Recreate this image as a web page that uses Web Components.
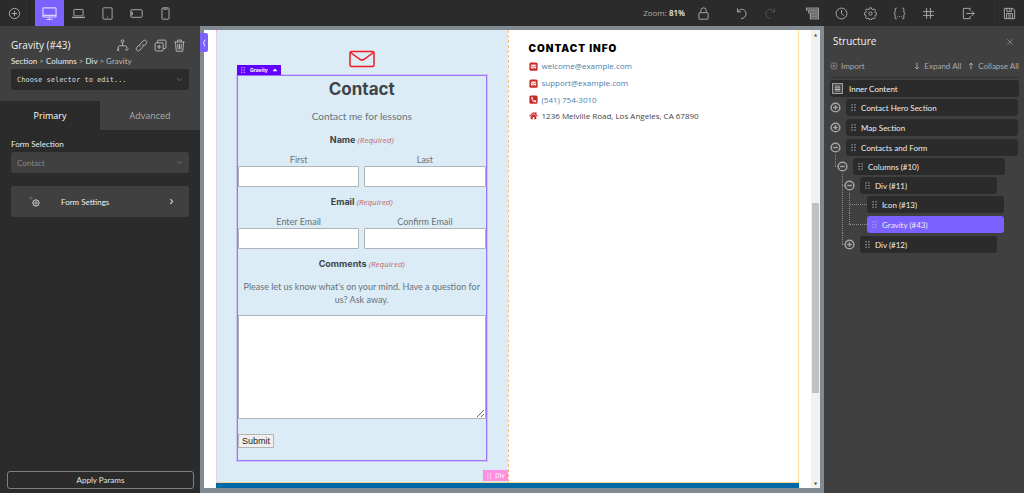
<!DOCTYPE html>
<html lang="en">
<head>
<meta charset="utf-8">
<meta name="viewport" content="width=device-width, initial-scale=1">
<title>Page builder</title>
<style>
  html, body { height: 100%; margin: 0; }
  body { background: #404040; color: #e4e4e4; font: 8px/12px Lato, "Open Sans", sans-serif; }
</style>
</head>
<body>
<builder-app></builder-app>

<script>
const ICONS = {
  plus: '<circle cx="12" cy="12" r="9.5"/><path d="M12 7v10M7 12h10"/>',
  minus: '<circle cx="12" cy="12" r="9.5"/><path d="M7 12h10"/>',
  desktop: '<rect x="1.5" y="3" width="21" height="14.5" rx="1"/><path d="M12 17.500v3.500M7 21.500h10M1.500 15h21"/>',
  laptop: '<rect x="3.500" y="4.500" width="17" height="12" rx="1"/><path d="M1 19.500h22M1 17.500v2h22v-2"/>',
  tablet: '<rect x="3.500" y="1.500" width="17" height="21" rx="1.500"/><path d="M11 18.500h2"/>',
  landscape: '<rect x="1.500" y="5" width="21" height="14" rx="1.500"/><path d="M4.500 10v4M1.500 9h2v6h-2"/>',
  phone: '<rect x="5.500" y="1.500" width="13" height="21" rx="1.500"/><path d="M9 2v2.200h6V2"/>',
  lock: '<rect x="3.500" y="10.500" width="17" height="12" rx="1"/><path d="M7 10.500V6.500a5 5 0 0 1 10 0v4"/>',
  undo: '<path d="M4.500 2.500v6.500h6.500M4.500 9c4-5.500 10-6 13.500-2.500 3.500 3.700 3 9-.5 12.500-1.800 1.700-4 2.500-6.500 2.500"/>',
  redo: '<path d="M19.500 2.500v6.500H13M19.500 9C15.500 3.500 9.500 3 6 6.500c-3.500 3.700-3 9 .5 12.500 1.800 1.700 4 2.500 6.500 2.500"/>',
  layers: '<rect x="1" y="2" width="22" height="3.500"/><rect x="5" y="7.500" width="18" height="3.500"/><rect x="8" y="13" width="15" height="3.500"/><rect x="8" y="18.500" width="15" height="3.500"/>',
  clock: '<circle cx="12" cy="12" r="10"/><path d="M12 5.500V12l4 4"/>',
  gear: '<circle cx="12" cy="12" r="3"/><path d="M10.200 1.500h3.600l.6 2.700 2 .8 2.400-1.500 2.400 2.500-1.400 2.400.8 2 2.800.6v3.400l-2.800.7-.8 2 1.400 2.400-2.400 2.400-2.400-1.500-2 .8-.6 2.800h-3.600l-.6-2.800-2-.8-2.400 1.500L2.800 19.500l1.400-2.400-.8-2-2.800-.7V11l2.800-.6.8-2L2.800 6l2.400-2.500L7.600 5l2-.8z"/>',
  braces: '<path d="M7 2H5.500Q4 2 4 4v5q0 2-2.500 3Q4 13 4 15v5q0 2 1.500 2H7M17 2h1.500Q20 2 20 4v5q0 2 2.500 3Q20 13 20 15v5q0 2-1.500 2H17M8 18h1.500M11.300 18h1.500M14.600 18h1.500"/>',
  hash: '<path d="M8.500 2v20M15.500 2v20M2 8.500h20M2 15.500h20"/>',
  exit: '<path d="M15 7V2.500H2.500v19H15V17M8 12h14.500M18 7.500l4.500 4.500-4.500 4.500"/>',
  save: '<path d="M2.500 2.500h16l3 3v16h-19zM7 2.500V8h9V2.500M12.500 4v2.500M6.500 21.500V12h11v9.500M9 15h6M9 18.500h6"/>',
  tree: '<circle cx="12" cy="4" r="2.500"/><path d="M12 6.500v6M4 18v-3.500l2-2h12l2 2V18M2 18l4 4M6 18l-4 4M17 18.500l2.500 3 3.500-4"/>',
  link: '<path d="M10 14.500c-2-2-1.500-4.500 0-6l5-5c4-3.800 9 1.200 5.500 5.300l-4 4M14 9.500c2 2 1.500 4.500 0 6l-5 5c-4 3.800-9-1.200-5.500-5.300l4-4"/>',
  copy: '<rect x="2" y="7" width="15" height="15" rx="2"/><path d="M6.500 7V4q0-2 2-2H20q2 0 2 2v11.500q0 2-2 2h-3M9.500 10.500v8M5.500 14.500h8"/>',
  trash: '<path d="M2.500 5.500h19M8.500 5.500V2h7v3.500M4.500 5.500l1.500 17h12l1.500-17M8.700 9l.5 10M12 9v10M15.300 9l-.5 10"/>',
  close: '<path d="M4 4l16 16M20 4L4 20"/>',
  down: '<path d="M12 2v19M6 15l6 6 6-6"/>',
  up: '<path d="M12 22V3M6 9l6-6 6 6"/>',
  chevdown: '<path d="M4 8l8 8 8-8"/>',
  chevright: '<path d="M8 4l8 8-8 8"/>',
  collapse: '<path d="M15 2Q6 12 15 22"/>',
  caret: '<path d="M4 16l8-9 8 9z" fill="currentColor"/>',
  grip: '<g fill="currentColor" stroke="none"><rect x="5" y="1" width="4" height="4"/><rect x="15" y="1" width="4" height="4"/><rect x="5" y="10" width="4" height="4"/><rect x="15" y="10" width="4" height="4"/><rect x="5" y="19" width="4" height="4"/><rect x="15" y="19" width="4" height="4"/></g>',
  doc: '<rect x="1.500" y="1.500" width="21" height="21"/><path d="M5.500 6.500h13M5.500 10.200h13M5.500 13.900h13M5.500 17.600h13"/>',
  cogs: '<circle cx="15" cy="15" r="6.500"/><circle cx="15" cy="15" r="2.500"/><path d="M15 6.500v2M15 21.500v2M6.500 15h2M21.500 15h2M9 9l1.500 1.500M21 9l-1.500 1.500M9 21l1.500-1.500M21 21l-1.500-1.500"/><circle cx="4" cy="4" r="2.500" stroke="#61737c"/>',
  mailsq: '<rect x="1" y="1" width="22" height="22" rx="4" fill="currentColor" stroke="none"/><path d="M5 7h14v10H5z" fill="#fff" stroke="none"/><path d="M5 9.500l7 4.500 7-4.500" stroke-width="2"/>',
  phonesq: '<rect x="1" y="1" width="22" height="22" rx="4" fill="currentColor" stroke="none"/><path d="M6 6l3-1 2 4-2 2q1.500 3 4.500 4.500l2-2 4 2-1 3.500Q7 20 6 6z" fill="#fff" stroke="none"/>',
  house: '<path d="M12 3L1 12.500l1.300 1.500L12 6l9.700 8 1.300-1.500-3.500-3V4h-3v3z" fill="currentColor" stroke-width="1"/><path d="M4.500 14L12 8l7.500 6v8h-5.500v-6h-4v6H4.500z" fill="currentColor" stroke="none"/>',
};

class BaseElement extends HTMLElement {
  connectedCallback() {
    if (this.shadowRoot) return;
    this.attachShadow({ mode: 'open' }).innerHTML = this.render();
  }
  attr(name, fallback = '') { return this.getAttribute(name) ?? fallback; }
}

/* Line icon on a 24-unit grid; size comes from --size. */
customElements.define('ui-icon', class extends BaseElement {
  render() {
    return `<style>
      :host { display: inline-flex; flex: none; width: var(--size, 13px); height: var(--size, 13px); }
      svg { width: 100%; height: 100%; }
    </style>
    <svg viewBox="0 0 24 24" fill="none" stroke="currentColor" stroke-width="${this.attr('stroke', '1.8')}" aria-hidden="true">${ICONS[this.attr('name')]}</svg>`;
  }
});

customElements.define('tool-button', class extends BaseElement {
  render() {
    return `<style>
      :host { display: flex; width: 29px; color: #a9a9a9; }
      :host([active]) { background: #7b61ff; color: #dcd6ff; }
      :host([active]) ui-icon { --size: 15px; }
      :host([dim]) { color: #505050; }
      button { flex: 1; display: grid; place-items: center; padding: 0; border: 0; background: none; color: inherit; }
    </style>
    <button aria-label="${this.attr('label')}"><ui-icon name="${this.attr('icon')}"></ui-icon></button>`;
  }
});

customElements.define('top-bar', class extends BaseElement {
  render() {
    return `<style>
      :host { display: flex; justify-content: space-between; height: 26px; background: #2b2b2b; }
      .group { display: flex; }
      .edge { display: flex; }
      .first { margin-right: 5px; border-right: 1px solid #232323; }
      .last { margin-left: 11px; border-left: 1px solid #293434; }
      .gap { margin-left: 11px; }
      .history { margin-left: 9px; }
      .tools { margin-left: 13px; }
      .zoom { align-self: center; margin-right: 4px; font: 8px/12px "Open Sans", sans-serif; color: #aaa; }
      b { font-weight: 600; color: #f0f0f0; }
    </style>
    <div class="group">
      <div class="edge first"><tool-button icon="plus" label="Add element"></tool-button></div>
      <tool-button icon="desktop" label="Desktop" active></tool-button>
      <tool-button icon="laptop" label="Laptop"></tool-button>
      <tool-button icon="tablet" label="Tablet"></tool-button>
      <tool-button icon="landscape" label="Phone landscape"></tool-button>
      <tool-button icon="phone" label="Phone portrait"></tool-button>
    </div>
    <div class="group">
      <span class="zoom">Zoom: <b>81%</b></span>
      <tool-button icon="lock" label="Lock"></tool-button>
      <tool-button class="history" icon="undo" label="Undo"></tool-button>
      <tool-button icon="redo" label="Redo" dim></tool-button>
      <tool-button class="tools" icon="layers" label="Structure"></tool-button>
      <tool-button icon="clock" label="History"></tool-button>
      <tool-button icon="gear" label="Settings"></tool-button>
      <tool-button icon="braces" label="Selectors"></tool-button>
      <tool-button icon="hash" label="Code"></tool-button>
      <tool-button class="gap" icon="exit" label="Exit"></tool-button>
      <div class="edge last"><tool-button icon="save" label="Save"></tool-button></div>
    </div>`;
  }
});

/* Drop-down with its own chevron. */
customElements.define('select-box', class extends BaseElement {
  render() {
    return `<style>
      :host { display: grid; align-items: center; height: 21px; border-radius: 3px; background: #2b2b2b; color: #ddd; }
      :host([muted]) { background: #404040; color: #888; }
      select, ui-icon { grid-area: 1 / 1; }
      select { width: 100%; height: 100%; padding: 0 6px; border: 0; appearance: none; background: none; color: inherit; font: 8px/12px Lato, sans-serif; }
      :host([mono]) select { font: 7px/12px "DejaVu Sans Mono", monospace; }
      ui-icon { --size: 7px; justify-self: end; margin-right: 6px; color: #777; pointer-events: none; }
    </style>
    <select aria-label="${this.attr('label')}"><option>${this.attr('value')}</option></select>
    <ui-icon name="chevdown" stroke="3"></ui-icon>`;
  }
});

customElements.define('settings-panel', class extends BaseElement {
  render() {
    return `<style>
      :host { display: flex; flex-direction: column; background: #2b2b2b; }
      header { padding: 12px 11px 11px; background: #404040; }
      .title { display: flex; align-items: center; justify-content: space-between; height: 15px; }
      h1 { margin: 0; font: 500 10px/15px "Open Sans", sans-serif; color: #f2f2f2; }
      .actions { display: flex; gap: 6px; margin-right: 3px; }
      .actions button { display: flex; padding: 0; border: 0; background: none; color: #b5b5b5; }
      nav { margin: 2px 0; }
      nav a { color: #eee; text-decoration: none; }
      nav span { color: #bbb; }
      .tabs { display: grid; grid-template-columns: 1fr 1fr; background: #404040; }
      .tabs button { height: 29px; padding: 0; border: 0; background: none; font: 9px/12px "Open Sans", sans-serif; color: #aaa; }
      .tabs .on { background: #2b2b2b; color: #fff; }
      .body { flex: 1; padding: 8px 11px; }
      .label { margin-bottom: 2px; color: #eee; }
      .settings { display: flex; align-items: center; width: 100%; height: 31px; margin-top: 13px; padding: 0 14px 0 18px; border: 0; border-radius: 3px; background: #404040; font: 8px/12px Lato, sans-serif; color: #f0f0f0; text-align: left; }
      .settings span { flex: 1; margin-left: 21px; }
      .settings ui-icon { --size: 11px; color: #ccc; }
      .settings ui-icon:last-child { --size: 7px; }
      .apply { height: 18px; margin: 0 6px 4px 7px; border: 1px solid #808080; border-radius: 3px; background: none; font: 8px/12px Lato, sans-serif; color: #e4e4e4; }
    </style>
    <header>
      <div class="title">
        <h1>Gravity (#43)</h1>
        <div class="actions">
          <button aria-label="Conditions"><ui-icon name="tree"></ui-icon></button>
          <button aria-label="Copy link"><ui-icon name="link"></ui-icon></button>
          <button aria-label="Duplicate"><ui-icon name="copy"></ui-icon></button>
          <button aria-label="Delete"><ui-icon name="trash"></ui-icon></button>
        </div>
      </div>
      <nav><a href="#section">Section</a> <span>&gt;</span> <a href="#columns">Columns</a> <span>&gt;</span> <a href="#div">Div</a> <span>&gt; Gravity</span></nav>
      <select-box mono label="Selector" value="Choose selector to edit..."></select-box>
    </header>
    <div class="tabs"><button class="on">Primary</button><button>Advanced</button></div>
    <div class="body">
      <div class="label">Form Selection</div>
      <select-box muted label="Form Selection" value="Contact"></select-box>
      <button class="settings"><ui-icon name="cogs" stroke="2"></ui-icon><span>Form Settings</span><ui-icon name="chevright" stroke="4"></ui-icon></button>
    </div>
    <button class="apply">Apply Params</button>`;
  }
});

/* Caption with a red "(Required)" mark. */
customElements.define('field-heading', class extends BaseElement {
  render() {
    return `<style>
      :host { display: block; font: bold 9px/12px Inter, sans-serif; color: #404448; text-align: center; }
      i { font: italic 8px/12px "Open Sans", sans-serif; color: #c2686b; }
    </style><slot></slot> <i>(Required)</i>`;
  }
});

customElements.define('text-field', class extends BaseElement {
  render() {
    return `<style>
      :host { display: block; min-width: 0; }
      label { display: block; text-align: center; line-height: 13px; }
      input { display: block; box-sizing: border-box; width: 100%; height: 21px; border: 1px solid #aeb4b8; border-radius: 1px; background: #fff; }
    </style>
    <label for="field"><slot></slot></label><input id="field" type="text">`;
  }
});

customElements.define('contact-form', class extends BaseElement {
  render() {
    return `<style>
      :host { display: block; position: relative; color: #68727a; font: 9px/13px Lato, sans-serif; text-align: center; }
      .frame { border: 1px solid #9a75fa; box-shadow: 0 0 0 1px #cdc4f8; }
      .tag { position: absolute; left: 0; top: -10px; z-index: 1; display: flex; align-items: center; gap: 4px; height: 10px; padding: 0 3px; background: #6200ff; color: #fff; font: bold 5px/10px Inter, sans-serif; --size: 6px; }
      h2 { margin: 0 0 11px; padding-top: 3px; font: bold 17px/20px Inter, sans-serif; color: #404448; }
      p { margin: 0; }
      .intro { margin-bottom: 11px; font-size: 10px; }
      .pair { display: grid; grid-template-columns: 1fr 1fr; gap: 5px; margin: 7px 0 9px; }
      .note { margin: 10px 0 9px; }
      textarea { display: block; box-sizing: border-box; width: 100%; height: 104px; margin: 0 0 15px; border: 1px solid #aeb4b8; background: #fff; resize: vertical; }
      .submit { display: block; height: 14px; margin-bottom: 12px; padding: 0 3px; border: 1px solid #b5b5b5; background: #efefef; font: 9px/12px "Liberation Sans", sans-serif; color: #222; }
    </style>
    <div class="tag"><ui-icon name="grip"></ui-icon>Gravity<ui-icon name="caret"></ui-icon></div>
    <div class="frame">
      <h2>Contact</h2>
      <p class="intro">Contact me for lessons</p>
      <field-heading>Name</field-heading>
      <div class="pair"><text-field>First</text-field><text-field>Last</text-field></div>
      <field-heading>Email</field-heading>
      <div class="pair"><text-field>Enter Email</text-field><text-field>Confirm Email</text-field></div>
      <field-heading>Comments</field-heading>
      <p class="note">Please let us know what's on your mind. Have a question for us? Ask away.</p>
      <textarea aria-label="Comments"></textarea>
      <button class="submit">Submit</button>
    </div>`;
  }
});

customElements.define('contact-info', class extends BaseElement {
  render() {
    return `<style>
      :host { display: block; color: #444; font: 8px/12px "Open Sans", sans-serif; }
      h3 { margin: 0 0 6px; font: 900 10px/12px Inter, sans-serif; letter-spacing: 1px; color: #000; }
      ul { display: grid; gap: 5px; margin: 0; padding: 0; list-style: none; }
      li { display: flex; align-items: center; gap: 4px; height: 12px; white-space: nowrap; }
      li:nth-child(n+3) { height: 11px; }
      ui-icon { --size: 9px; color: #cb2b26; }
      a { color: #4c7dab; text-decoration: none; }
    </style>
    <h3>CONTACT INFO</h3>
    <ul>
      <li><ui-icon name="mailsq"></ui-icon><a href="mailto:welcome@example.com">welcome@example.com</a></li>
      <li><ui-icon name="mailsq"></ui-icon><a href="mailto:support@example.com">support@example.com</a></li>
      <li><ui-icon name="phonesq"></ui-icon><a href="tel:5417543010">(541) 754-3010</a></li>
      <li><ui-icon name="house"></ui-icon><span>1236 Melville Road, Los Angeles, CA 67890</span></li>
    </ul>`;
  }
});

customElements.define('page-canvas', class extends BaseElement {
  render() {
    return `<style>
      :host { display: flex; position: relative; min-width: 0; box-sizing: border-box; padding: 4px 4px 5px; background: #828a91; }
      .handle { position: absolute; left: 0; top: 7px; display: grid; place-items: center; width: 8px; height: 19px; padding: 0; border: 0; border-radius: 0 2px 2px 0; background: #7b61ff; color: #fff; --size: 8px; }
      .page { flex: 1; min-width: 0; display: flex; flex-direction: column; padding: 0 12px; background: #fff; }
      .columns { flex: 1; display: grid; grid-template-columns: 1fr 1fr; border-bottom: 1px solid #f5d796; }
      .left { position: relative; padding: 20px 21px 0 20px; border-left: 1px dotted #f0b5dd; background: #dbecf6; }
      .left .mail { display: block; width: 26px; height: 18px; margin: 0 auto 7px; }
      .right { padding: 12px 20px; border: solid #ffdd9b; border-width: 0 1px; border-left-style: dashed; border-left-color: #f8bb83; }
      .tag { position: absolute; right: 0; bottom: 1px; display: flex; align-items: center; gap: 3px; height: 11px; padding: 0 3px; background: #ff90df; color: #fff; font: 6px/11px Inter, sans-serif; --size: 6px; }
      .next { height: 5px; background: #0069a6; }
      .scroll { display: flex; flex-direction: column; justify-content: space-between; width: 9px; background: #f1f1f1; color: #555; font: 4px/9px "DejaVu Sans", sans-serif; text-align: center; }
      .above { flex: 164; }
      .thumb { flex: 190; margin: 0 1px; background: #c1c1c1; }
      .below { flex: 86; }
    </style>
    <div class="page">
      <div class="columns">
        <section class="left">
          <svg class="mail" viewBox="0 0 26 18" fill="none" stroke="#f01a20" stroke-width="1.500" aria-hidden="true"><rect x="1" y="1.500" width="24" height="15" rx="1.500"/><path d="M1.500 2.500l9.800 7q1.700 1 3.400 0l9.800-7"/></svg>
          <contact-form></contact-form>
          <div class="tag"><ui-icon name="grip"></ui-icon>Div</div>
        </section>
        <section class="right"><contact-info></contact-info></section>
      </div>
      <div class="next"></div>
    </div>
    <div class="scroll" aria-hidden="true"><span>▲</span><div class="above"></div><div class="thumb"></div><div class="below"></div><span>▼</span></div>
    <button class="handle" aria-label="Collapse panel"><ui-icon name="collapse" stroke="2.500"></ui-icon></button>`;
  }
});

/* One node of the structure tree; nested nodes go in the slot. */
customElements.define('tree-item', class extends BaseElement {
  render() {
    const state = this.attr('state');
    const toggle = state ? `<button class="toggle" aria-label="Toggle ${this.attr('label')}"><ui-icon name="${state}" stroke="3.200"></ui-icon></button>` : '<span class="toggle"></span>';
    return `<style>
      :host { display: block; position: relative; --right: 0px; }
      :host([level="1"]) { --right: 13px; }
      :host([level="2"]) { --right: 21px; }
      :host([level="3"]) { --right: 14px; }
      :host([level])::before { content: ""; position: absolute; left: -2px; top: -3px; bottom: 0; border-left: 1px dotted #8c8c8c; }
      :host([level]:last-child)::before { bottom: auto; height: 11px; }
      :host([level])::after { content: ""; position: absolute; left: -2px; top: 8px; width: 3px; border-top: 1px dotted #8c8c8c; }
      :host([level="3"])::after { width: 18px; }
      .line { display: flex; align-items: center; gap: 5px; margin-right: var(--right); }
      .toggle { display: flex; flex: none; width: 11px; height: 11px; padding: 0; border: 0; background: none; color: #a5a5a5; --size: 11px; }
      .row { flex: 1; display: flex; align-items: center; gap: 4px; height: 17px; padding: 0 4px; border-radius: 3px; background: #2b2b2b; color: #eee; white-space: nowrap; }
      .row ui-icon { --size: 7px; color: #bbb; }
      :host([selected]) .row { background: #7b61ff; }
      .kids { display: grid; gap: 3px; margin: 2px 0 0 7px; }
      :host(:empty) .kids { display: none; }
    </style>
    <div class="line">${toggle}<div class="row"><ui-icon name="grip"></ui-icon>${this.attr('label')}</div></div>
    <div class="kids"><slot></slot></div>`;
  }
});

customElements.define('structure-panel', class extends BaseElement {
  render() {
    return `<style>
      :host { display: block; padding: 8px 5px 0 6px; background: #404040; }
      header { display: flex; align-items: center; justify-content: space-between; padding: 0 5px 0 3px; }
      h2 { margin: 0; font: 500 10px/15px "Open Sans", sans-serif; color: #f2f2f2; }
      button { display: flex; align-items: center; gap: 3px; padding: 0; border: 0; background: none; color: #aaa; font: 8px/12px Lato, sans-serif; --size: 8px; }
      .bar { display: flex; gap: 6px; margin-top: 11px; padding-bottom: 5px; border-bottom: 1px solid #303030; color: #aaa; }
      .bar button:first-child { margin-right: auto; }
      .root { display: flex; align-items: center; gap: 6px; height: 17px; margin: 2px 0; padding: 0 2px; border-radius: 3px; background: #2b2b2b; color: #f0f0f0; }
      .root ui-icon { --size: 11px; color: #bbb; }
      .tree { display: grid; gap: 3px; margin-right: 1px; }
    </style>
    <header><h2>Structure</h2><button aria-label="Close"><ui-icon name="close"></ui-icon></button></header>
    <div class="bar">
      <button><ui-icon name="plus"></ui-icon>Import</button>
      <button><ui-icon name="down" stroke="2.800"></ui-icon>Expand All</button>
      <button><ui-icon name="up" stroke="2.800"></ui-icon>Collapse All</button>
    </div>
    <div class="root"><ui-icon name="doc" stroke="2.200"></ui-icon>Inner Content</div>
    <div class="tree">
      <tree-item state="plus" label="Contact Hero Section"></tree-item>
      <tree-item state="plus" label="Map Section"></tree-item>
      <tree-item state="minus" label="Contacts and Form">
        <tree-item level="1" state="minus" label="Columns (#10)">
          <tree-item level="2" state="minus" label="Div (#11)">
            <tree-item level="3" label="Icon (#13)"></tree-item>
            <tree-item level="3" selected label="Gravity (#43)"></tree-item>
          </tree-item>
          <tree-item level="2" state="plus" label="Div (#12)"></tree-item>
        </tree-item>
      </tree-item>
    </div>`;
  }
});

customElements.define('builder-app', class extends BaseElement {
  render() {
    return `<style>
      :host { display: grid; grid-template: auto 1fr / 200px minmax(0, 1fr) 200px; min-height: 100vh; }
      top-bar { grid-column: 1 / -1; }
    </style>
    <top-bar></top-bar>
    <settings-panel></settings-panel>
    <page-canvas></page-canvas>
    <structure-panel></structure-panel>`;
  }
});
</script>
</body>
</html>
